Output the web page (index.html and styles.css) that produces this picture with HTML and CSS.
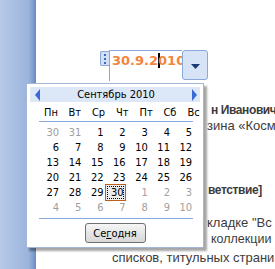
FILE: index.html
```html
<!DOCTYPE html>
<html lang="ru">
<head>
    <meta charset="UTF-8">
    <title>Выбор даты</title>
    <link rel="stylesheet" href="styles.css">
</head>
<body>
    <div class="window">
        <div class="sidebar"></div>
        <div class="page">
            <div class="date-field">
                <span class="grip"><i></i><i></i><i></i></span>
                <span class="date-input">30.9.2<span class="caret"></span>010</span>
                <span class="drop-btn">
                    <svg width="9" height="5" viewBox="0 0 9 5"><path d="M0 0h9L4.5 5z" fill="#1b3a78"/></svg>
                </span>
            </div>
            <div class="line bold l1">н Иванович</div>
            <div class="line l2">зина «Косм</div>
            <div class="line bold l3">ветствие]</div>
            <div class="line l4">кладке "Вс</div>
            <div class="line l5">коллекции</div>
            <div class="line l6">списков, титульных страни</div>
        </div>

        <!-- всплывающий календарь -->
        <div class="calendar">
            <div class="cal-head">
                <svg width="5" height="12" viewBox="0 0 5 12"><path d="M5 0v12L0 6z" fill="#3b6ad6"/></svg>
                <span>Сентябрь 2010</span>
                <svg width="5" height="12" viewBox="0 0 5 12"><path d="M0 0v12l5-6z" fill="#3b6ad6"/></svg>
            </div>
            <div class="weekdays">
                <span>Пн</span><span>Вт</span><span>Ср</span><span>Чт</span><span>Пт</span><span>Сб</span><span>Вс</span>
            </div>
            <div class="days">
                <span class="other">30</span><span class="other">31</span><span>1</span><span>2</span><span>3</span><span>4</span><span>5</span>
                <span>6</span><span>7</span><span>8</span><span>9</span><span>10</span><span>11</span><span>12</span>
                <span>13</span><span>14</span><span>15</span><span>16</span><span>17</span><span>18</span><span>19</span>
                <span>20</span><span>21</span><span>22</span><span>23</span><span>24</span><span>25</span><span>26</span>
                <span>27</span><span>28</span><span>29</span><span class="today">30</span><span class="other">1</span><span class="other">2</span><span class="other">3</span>
                <span class="other">4</span><span class="other">5</span><span class="other">6</span><span class="other">7</span><span class="other">8</span><span class="other">9</span><span class="other">10</span>
            </div>
            <div class="sep"></div>
            <div class="cal-foot">
                <button class="today-btn">Се<u>г</u>одня</button>
            </div>
        </div>
    </div>
</body>
</html>
```

FILE: styles.css
```css
body {
    margin: 0;
    background: #fff;
}

.window {
    position: relative;
    display: flex;
    width: 275px;
    height: 269px;
    overflow: hidden;
}

.sidebar {
    width: 36px;
    flex-shrink: 0;
    background: linear-gradient(to right, #b6cae8, #9bb4dc 80%, #7e9ccd 92%, #6a88bd);
}

.page {
    flex: 1;
    min-width: 0;
    font-family: "Liberation Sans", Arial, sans-serif;
    font-size: 13px;
    color: #3c3c3c;
}

/* поле даты */
.date-field {
    display: flex;
    margin: 50px 0 0 64px;
    height: 31px;
}

.grip {
    box-sizing: border-box;
    width: 9px;
    height: 15px;
    margin-top: 1px;
    display: flex;
    flex-direction: column;
    align-items: center;
    justify-content: center;
    gap: 2px;
    background: #d3e0f4;
    border: 1px solid #8aa8dc;
    border-right: none;
    border-radius: 2px 0 0 2px;
}

.grip i {
    width: 2px;
    height: 2px;
    background: #3f68c4;
}

.date-input {
    box-sizing: border-box;
    width: 73px;
    height: 31px;
    padding: 2px 0 0 2px;
    border: 1px solid #8aa8dc;
    border-right: none;
    border-bottom: none;
    font-family: "DejaVu Sans", sans-serif;
    font-weight: bold;
    font-size: 13px;
    line-height: 15px;
    color: #f3843c;
    white-space: nowrap;
}

.caret {
    display: inline-block;
    width: 2px;
    height: 15px;
    margin-right: -2px;
    vertical-align: top;
    background: #000;
}

.drop-btn {
    box-sizing: border-box;
    width: 26px;
    height: 30px;
    display: flex;
    align-items: center;
    justify-content: center;
    padding-top: 3px;
    background: #d7e4f8;
    border: 1px solid #8aa8dc;
    border-radius: 3px;
}

.line {
    line-height: 15px;
    white-space: nowrap;
}

.bold {
    font-weight: bold;
    font-size: 12px;
    letter-spacing: -0.4px;
}

.l1 { margin-top: 22px; padding-left: 175px; }
.l2 { padding-left: 171px; }
.l3 { margin-top: 50px; padding-left: 172px; }
.l4 { margin-top: 17px; padding-left: 171px; }
.l5 { margin-top: 2px; padding-left: 175px; font-size: 12.5px; }
.l6 { margin-top: 3px; padding-left: 76px; }

/* календарь */
.calendar {
    position: absolute;
    left: 26px;
    top: 83px;
    box-sizing: border-box;
    width: 178px;
    height: 165px;
    padding: 3px;
    background: #fff;
    border: 1px solid #a3b6d6;
    box-shadow: 3px 3px 2px rgba(0, 0, 0, 0.35);
    font-family: "DejaVu Sans Condensed", "DejaVu Sans", sans-serif;
    font-stretch: condensed;
    font-size: 11px;
    color: #000;
}

.cal-head {
    display: flex;
    align-items: center;
    justify-content: space-between;
    height: 15px;
    padding: 0 3px 0 5px;
    background: #dce7f7;
}

.weekdays {
    display: grid;
    grid-template-columns: repeat(7, 23.8px);
    height: 20px;
    align-items: center;
    padding: 2px 0 0 3px;
    box-sizing: border-box;
    border-bottom: 1px solid #88a8e0;
    margin: 0 7px 0 9px;
}

.weekdays span {
    text-align: center;
    margin-left: -6px;
}

.days {
    display: grid;
    grid-template-columns: repeat(7, 22.17px);
    grid-auto-rows: 15px;
    align-items: center;
    padding: 3px 0 3px 7px;
}

.days span {
    text-align: right;
    line-height: 15px;
}

.days .other {
    color: #a0a0a0;
}

.days .today {
    box-sizing: border-box;
    margin-left: 2px;
    padding-right: 1px;
    background: #ececec;
    border: 1px solid #bd5f17;
    outline: 1px dotted #000;
    outline-offset: -3px;
}

.sep {
    height: 1px;
    margin: 0 7px 0 9px;
    background: #88a8e0;
}

.cal-foot {
    display: flex;
    justify-content: center;
    padding-top: 4px;
}

.today-btn {
    width: 61px;
    height: 20px;
    padding: 0;
    font: inherit;
    color: #000;
    background: linear-gradient(#f6f6f6, #e6e6e6 50%, #d8d8d8);
    border: 1px solid #707070;
    border-radius: 3px;
}
```
